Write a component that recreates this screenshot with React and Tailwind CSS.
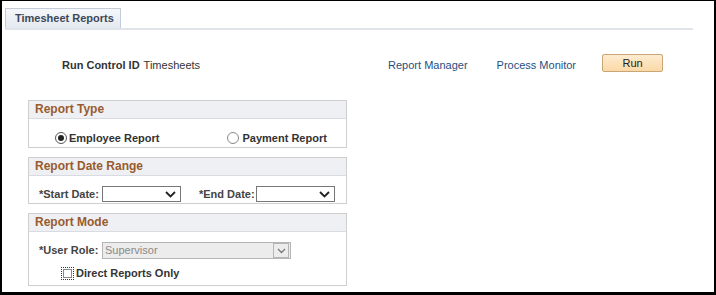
import React from "react";

function Chevron() {
  return (
    <svg width="11" height="7" viewBox="0 0 11 7">
      <path d="M1 1 L5.5 5.5 L10 1" fill="none" stroke="#222" strokeWidth="1.8" />
    </svg>
  );
}

function Section({ title, children, className }) {
  return (
    <div className={`w-[319px] border border-[#cfcfcf] ${className}`}>
      <div className="h-[18px] bg-[#eef0f3] border-b border-[#d8dce2] pl-[6px] text-[12px] font-bold leading-[17px] text-[#995b2e] whitespace-nowrap">
        {title}
      </div>
      {children}
    </div>
  );
}

export default function App() {
  return (
    <div
      className="w-[716px] h-[295px] bg-white border-black border-t-[1px] border-l-[2px] border-r-[2px] border-b-[3px] text-[#333] text-[11px] whitespace-nowrap"
      style={{ fontFamily: '"Liberation Sans", Arial, sans-serif' }}
    >
      {/* Tab strip */}
      <div className="pt-[7px] pl-[3px] pr-[21px]">
        <div className="flex border-b-[2px] border-[#dfe4ea]">
          <div className="h-[20px] w-[116px] shrink-0 border border-b-0 border-[#c3ccd8] bg-gradient-to-b from-[#f5f7fa] to-[#e4e9f0] pl-[9px] text-[11px] font-bold leading-[19px] text-[#3d4858]">
            Timesheet Reports
          </div>
        </div>
      </div>

      {/* Run control row */}
      <div className="flex items-center h-[22px] mt-[24px]">
        <div className="w-[60px] shrink-0" />
        <span className="font-bold shrink-0">Run Control ID</span>
        <span className="ml-[4px] shrink-0">Timesheets</span>
        <span className="ml-[188px] text-[#1f4f82] shrink-0">Report Manager</span>
        <span className="ml-[29px] text-[#1f4f82] shrink-0">Process Monitor</span>
        <button className="ml-[26px] mt-[-4px] w-[61px] h-[18px] shrink-0 rounded-[2px] border border-[#c9a677] bg-gradient-to-b from-[#fdebcf] to-[#fbd9a6] text-[11px] text-[#222] leading-[16px]">
          Run
        </button>
      </div>

      <div className="pl-[26px] mt-[24px] flex flex-col">
        <Section title="Report Type" className="h-[48px]">
          <div className="flex items-center h-[12px] mt-[13px] font-bold text-[#333]">
            <div className="ml-[26px] w-[12px] h-[12px] shrink-0 rounded-full border border-[#555] flex items-center justify-center bg-white">
              <div className="w-[6px] h-[6px] rounded-full bg-[#222]" />
            </div>
            <span className="ml-[2px]">Employee Report</span>
            <div className="ml-[68px] w-[12px] h-[12px] shrink-0 rounded-full border border-[#888] bg-white" />
            <span className="ml-[3px]">Payment Report</span>
          </div>
        </Section>

        <Section title="Report Date Range" className="h-[47px] mt-[9px]">
          <div className="flex items-center h-[16px] mt-[10px] font-bold text-[#444]">
            <span className="ml-[10px] w-[63px] shrink-0">*Start Date:</span>
            <div className="w-[79px] h-[16px] shrink-0 border border-[#777] flex items-center justify-end pr-[4px] bg-white">
              <Chevron />
            </div>
            <span className="ml-[18px] w-[57px] shrink-0">*End Date:</span>
            <div className="w-[79px] h-[16px] shrink-0 border border-[#777] flex items-center justify-end pr-[4px] bg-white">
              <Chevron />
            </div>
          </div>
        </Section>

        <Section title="Report Mode" className="h-[73px] mt-[9px]">
          <div className="flex items-center h-[17px] mt-[10px] font-bold text-[#444]">
            <span className="ml-[10px] w-[63px] shrink-0">*User Role:</span>
            <div className="w-[189px] h-[17px] shrink-0 border border-[#b5b5b5] bg-[#ececec] flex items-center pl-[2px] font-normal text-[#8a8a8a]">
              <span className="flex-1">Supervisor</span>
              <div className="w-[16px] h-[15px] border border-[#b5b5b5] flex items-center justify-center mr-[1px]">
                <svg width="9" height="6" viewBox="0 0 9 6">
                  <path d="M1 1 L4.5 4.5 L8 1" fill="none" stroke="#777" strokeWidth="1.3" />
                </svg>
              </div>
            </div>
          </div>
          <div className="flex items-center h-[14px] mt-[7px] font-bold text-[#333]">
            <div className="ml-[32px] w-[13px] h-[13px] shrink-0 border border-dotted border-[#333] p-[1px]">
              <div className="w-full h-full border border-[#888] bg-white" />
            </div>
            <span className="ml-[2px]">Direct Reports Only</span>
          </div>
        </Section>
      </div>
    </div>
  );
}
